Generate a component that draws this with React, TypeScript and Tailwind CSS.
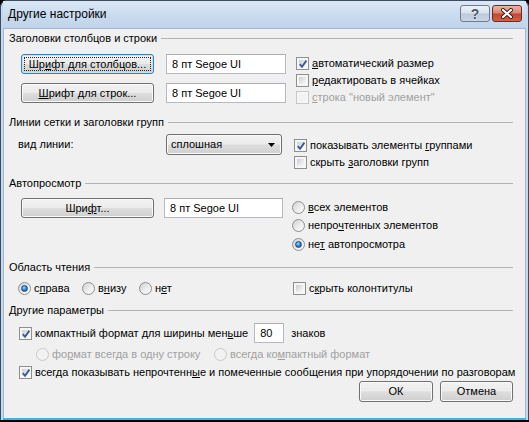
import type { ReactNode } from "react";
import { clsx } from "clsx";

const BODY = "font-['Liberation_Sans',Arial,sans-serif] text-[11px] leading-[13px] text-black";

function Header({ children }: { children: ReactNode }) {
  return (
    <div className="flex h-[16px] items-center pl-[5px] pr-[12px]">
      <span className="whitespace-nowrap">{children}</span>
      <div className="ml-[4px] h-px flex-1 bg-[#b4b4b4]" />
    </div>
  );
}

function Btn({ children, className, focused }: { children: ReactNode; className?: string; focused?: boolean }) {
  return (
    <div
      className={clsx(
        "relative flex h-[20px] shrink-0 items-center justify-center rounded-[3px] border bg-[linear-gradient(#f2f2f2,#ebebeb_48%,#dddddd_52%,#cfcfcf)]",
        focused ? "border-[#3c7fb1] shadow-[inset_0_0_0_1px_#bfe3f7]" : "border-[#707070] shadow-[inset_0_0_0_1px_#fafafa]",
        className
      )}
    >
      {focused && <span className="absolute inset-[2px] border border-dotted border-[#222]" />}
      <span className="whitespace-nowrap">{children}</span>
    </div>
  );
}

function TextBox({ children, className }: { children: ReactNode; className?: string }) {
  return (
    <div
      className={clsx(
        "flex h-[20px] shrink-0 items-center border border-[#b6b9c0] border-t-[#abadb3] bg-white pl-[5px]",
        className
      )}
    >
      <span className="whitespace-nowrap">{children}</span>
    </div>
  );
}

function Check({ checked, disabled }: { checked?: boolean; disabled?: boolean }) {
  return (
    <span
      className={clsx(
        "relative flex h-[13px] w-[13px] shrink-0 border p-[2px]",
        disabled ? "border-[#c8c8c8] bg-[#f6f6f6]" : "border-[#8e8f8f] bg-[#f6f6f6]"
      )}
    >
      <span
        className={clsx(
          "h-full w-full",
          disabled ? "bg-[#f2f2f2]" : "bg-[linear-gradient(135deg,#c9cdd3,#e9eaec_60%,#f8f8f8)]"
        )}
      />
      {checked && (
        <svg className="absolute left-[1px] top-[1px]" width="10" height="10" viewBox="0 0 10 10">
          <path d="M1.8 5.2 L4 7.8 L8.4 1.6" fill="none" stroke="#3d5898" strokeWidth="1.9" />
        </svg>
      )}
    </span>
  );
}

function Radio({ checked, disabled }: { checked?: boolean; disabled?: boolean }) {
  return (
    <span
      className={clsx(
        "flex h-[13px] w-[13px] shrink-0 items-center justify-center rounded-full border",
        disabled
          ? "border-[#c8c8c8] bg-[#f2f2f2]"
          : "border-[#8e8f8f] bg-[linear-gradient(135deg,#cdd0d5,#eeeeee_55%,#fbfbfb)]"
      )}
    >
      {checked && (
        <span className="h-[7px] w-[7px] rounded-full border border-[#1d4f8c] bg-[radial-gradient(circle_at_40%_35%,#b7e2ff,#2f86d6_45%,#0b4587)]" />
      )}
    </span>
  );
}

function Opt({ children, ctl, disabled, className }: { children: ReactNode; ctl: ReactNode; disabled?: boolean; className?: string }) {
  return (
    <div className={clsx("flex items-center", className)}>
      {ctl}
      <span className={clsx("ml-[3px] whitespace-nowrap", disabled && "text-[#a0a0a0]")}>{children}</span>
    </div>
  );
}

export default function App() {
  return (
    <div className={clsx("h-[422px] w-[529px] bg-black", BODY)}>
      <div className="flex h-[420px] flex-col rounded-t-[7px] border-x border-t border-[#3b4c63] bg-[#c5d8ee] px-[2px]">
        {/* title bar */}
        <div className="flex h-[27px] shrink-0 items-center bg-[linear-gradient(#dbe7f5,#c8daef_60%,#bfd3ea)] pl-[5px] pr-[4px]">
          <span className="flex-1 font-['Liberation_Sans',Arial,sans-serif] text-[12px] text-black">Другие настройки</span>
          <div className="mt-[-2px] flex items-center gap-[2px]">
            <div className="flex h-[17px] w-[30px] items-center justify-center rounded-[3px] border border-[#6d7c90] bg-[linear-gradient(#eef2f7,#d8e1ec_48%,#bccadb_52%,#c9d6e6)]">
              <span className="text-[14px] font-bold leading-none text-[#4a5666] [text-shadow:0_0_1px_#fff,0_0_1px_#fff]">?</span>
            </div>
            <div className="flex h-[17px] w-[30px] items-center justify-center rounded-[3px] border border-[#6e2b22] bg-[linear-gradient(#eab5a8,#d8826f_48%,#c5452f_52%,#d2604a)]">
              <svg width="14" height="11" viewBox="0 0 14 11">
                <path d="M3 2 L11 9 M11 2 L3 9" stroke="#3b1a14" strokeWidth="4" strokeLinecap="round" />
                <path d="M3 2 L11 9 M11 2 L3 9" stroke="#ffffff" strokeWidth="2.2" strokeLinecap="round" />
              </svg>
            </div>
          </div>
        </div>

        {/* content */}
        <div className="flex flex-1 flex-col border border-b-0 border-[#a3b8d0] bg-[#f0f0f0] pt-[1px]">
          <Header>Заголовки столбцов и строки</Header>
          <div className="flex h-[68px]">
            <div className="ml-[17px] flex flex-col gap-[9px] pt-[8px]">
              <div className="flex">
                <Btn focused className="w-[133px]">
                  Шр<u>и</u>фт для столбцов...
                </Btn>
                <TextBox className="ml-[12px] w-[120px]">8 пт Segoe UI</TextBox>
              </div>
              <div className="flex">
                <Btn className="w-[133px]">
                  <u>Ш</u>рифт для строк...
                </Btn>
                <TextBox className="ml-[12px] w-[120px]">8 пт Segoe UI</TextBox>
              </div>
            </div>
            <div className="ml-[10px] flex flex-col pt-[9px]">
              <Opt className="h-[17px]" ctl={<Check checked />}>
                <u>а</u>втоматический размер
              </Opt>
              <Opt className="h-[17px]" ctl={<Check />}>
                <u>р</u>едактировать в ячейках
              </Opt>
              <Opt className="h-[17px]" disabled ctl={<Check disabled />}>
                <u>с</u>трока "новый элемент"
              </Opt>
            </div>
          </div>

          <Header>Линии сетки и заголовки групп</Header>
          <div className="flex h-[45px]">
            <div className="ml-[14px] mt-[4px] flex h-[21px] w-[148px] items-center">
              <span>
                ви<u>д</u> линии:
              </span>
            </div>
            <div className="relative mt-[4px] flex h-[21px] w-[116px] items-center rounded-[3px] border border-[#707070] bg-[linear-gradient(#f2f2f2,#ebebeb_48%,#dddddd_52%,#cfcfcf)] pl-[4px] shadow-[inset_0_0_0_1px_#fafafa]">
              <span className="flex-1">сплошная</span>
              <svg className="mr-[6px]" width="7" height="4" viewBox="0 0 7 4">
                <path d="M0 0 L7 0 L3.5 4 Z" fill="#000" />
              </svg>
            </div>
            <div className="ml-[12px] flex flex-col pt-[7px]">
              <Opt className="h-[17px]" ctl={<Check checked />}>
                показывать элементы <u>г</u>руппами
              </Opt>
              <Opt className="h-[17px]" ctl={<Check />}>
                скрыть <u>з</u>аголовки групп
              </Opt>
            </div>
          </div>

          <Header>Автопросмотр</Header>
          <div className="flex h-[68px]">
            <div className="ml-[17px] flex pt-[7px]">
              <Btn className="w-[133px]">
                Шри<u>ф</u>т...
              </Btn>
              <TextBox className="ml-[10px] w-[119px]">8 пт Segoe UI</TextBox>
            </div>
            <div className="ml-[9px] flex flex-col pt-[7px]">
              <Opt className="h-[18.5px]" ctl={<Radio />}>
                <u>в</u>сех элементов
              </Opt>
              <Opt className="h-[18.5px]" ctl={<Radio />}>
                непро<u>ч</u>тенных элементов
              </Opt>
              <Opt className="h-[18.5px]" ctl={<Radio checked />}>
                не<u>т</u> автопросмотра
              </Opt>
            </div>
          </div>

          <Header>Область чтения</Header>
          <div className="flex h-[27px] pl-[14px] pt-[4px]">
            <Opt className="h-[18px] w-[64px]" ctl={<Radio checked />}>
              с<u>п</u>рава
            </Opt>
            <Opt className="h-[18px] w-[57px]" ctl={<Radio />}>
              в<u>н</u>изу
            </Opt>
            <Opt className="h-[18px] w-[154px]" ctl={<Radio />}>
              н<u>е</u>т
            </Opt>
            <Opt className="h-[18px]" ctl={<Check />}>
              с<u>к</u>рыть колонтитулы
            </Opt>
          </div>

          <Header>Другие параметры</Header>
          <div className="flex flex-1 flex-col pr-[12px]">
            <div className="mt-[5px] flex h-[20px] items-center pl-[15px]">
              <Opt ctl={<Check checked />}>
                компактный формат для ширины мен<u>ь</u>ше
              </Opt>
              <TextBox className="ml-[6px] w-[30px]">80</TextBox>
              <span className="ml-[7px]">знаков</span>
            </div>
            <div className="mt-[2px] flex h-[18px] items-center pl-[32px]">
              <Opt className="w-[178px]" disabled ctl={<Radio disabled />}>
                фо<u>р</u>мат всегда в одну строку
              </Opt>
              <Opt disabled ctl={<Radio disabled />}>
                всегда ко<u>м</u>пактный формат
              </Opt>
            </div>
            <div className="flex h-[18px] items-center pl-[15px]">
              <Opt ctl={<Check checked />}>
                всегда показывать непрочтенн<u>ы</u>е и помеченные сообщения при упорядочении по разговорам
              </Opt>
            </div>
            <div className="flex justify-end gap-[7px]">
              <Btn className="h-[21px] w-[74px]">ОК</Btn>
              <Btn className="h-[21px] w-[73px]">Отмена</Btn>
            </div>
          </div>
        </div>
        <div className="h-[2px] shrink-0 bg-[#3fb4df]" />
      </div>
    </div>
  );
}
